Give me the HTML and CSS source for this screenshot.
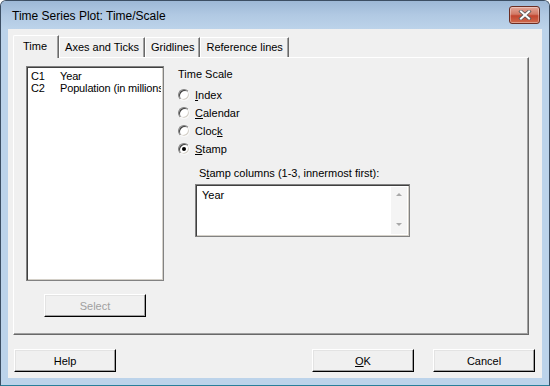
FILE: index.html
```html
<!DOCTYPE html>
<html lang="en">

<head>
    <meta charset="UTF-8">
    <title>Time Series Plot: Time/Scale</title>
    <link rel="stylesheet" href="styles.css">
</head>

<body>
    <div class="window">
        <div class="titlebar">
            <span class="title">Time Series Plot: Time/Scale</span>
            <button class="close" aria-label="Close">
                <svg width="14" height="10" viewBox="0 0 14 10">
                    <path d="M3 1.5 L11 8.5 M11 1.5 L3 8.5" stroke="#5a5a5a" stroke-width="3.6" stroke-linecap="square" />
                    <path d="M3 1.5 L11 8.5 M11 1.5 L3 8.5" stroke="#fff" stroke-width="2" stroke-linecap="square" />
                </svg>
            </button>
        </div>
        <div class="client">
            <div class="tabs">
                <div class="tab active">Time</div>
                <div class="tab">Axes and Ticks</div>
                <div class="tab">Gridlines</div>
                <div class="tab">Reference lines</div>
            </div>
            <div class="panel">
                <div class="left">
                    <div class="listbox">
                        <div class="row"><span class="col">C1</span><span>Year</span></div>
                        <div class="row"><span class="col">C2</span><span>Population (in millions)</span></div>
                    </div>
                    <button class="btn disabled">Select</button>
                </div>
                <div class="right">
                    <div class="group-label">Time Scale</div>
                    <label class="radio"><span class="dot"></span><span><u>I</u>ndex</span></label>
                    <label class="radio"><span class="dot"></span><span><u>C</u>alendar</span></label>
                    <label class="radio"><span class="dot"></span><span>Cloc<u>k</u></span></label>
                    <label class="radio"><span class="dot checked"></span><span><u>S</u>tamp</span></label>
                    <div class="stamp">
                        <div class="stamp-label">S<u>t</u>amp columns (1-3, innermost first):</div>
                        <div class="textbox">
                            <div class="text">Year</div>
                            <div class="scroll">
                                <span class="arrow up"></span>
                                <span class="arrow down"></span>
                            </div>
                        </div>
                    </div>
                </div>
            </div>
            <div class="footer">
                <button class="btn">Help</button>
                <div class="spacer"></div>
                <button class="btn"><u>O</u>K</button>
                <button class="btn">Cancel</button>
            </div>
        </div>
    </div>
</body>

</html>
```

FILE: styles.css
```css
* {
    box-sizing: border-box;
}

html,
body {
    margin: 0;
    padding: 0;
    width: 550px;
    height: 386px;
    overflow: hidden;
    background: #ffffff;
    font-family: 'Liberation Sans', Arial, sans-serif;
    font-size: 11px;
    color: #000;
}

u {
    text-decoration: underline;
    text-underline-offset: 1px;
}

.window {
    width: 550px;
    height: 386px;
    display: flex;
    flex-direction: column;
    background: #bcd3ea;
    border: 1px solid #3c4e63;
    border-bottom-color: #2a7f9a;
    border-radius: 6px 6px 0 0;
    overflow: hidden;
}

.titlebar {
    height: 28px;
    flex: none;
    display: flex;
    align-items: center;
    padding: 0 9px 0 11px;
    background: linear-gradient(to bottom, #9db8d6 0%, #b1c9e3 50%, #bcd3ea 100%);
}

.title {
    flex: 1;
    font-size: 12px;
    color: #000;
    padding-top: 1px;
}

.close {
    width: 31px;
    height: 18px;
    margin-top: -1px;
    padding: 0;
    display: flex;
    align-items: center;
    justify-content: center;
    border: 1px solid #6b2d22;
    border-radius: 3px;
    background: linear-gradient(to bottom, #e3a597 0%, #d27a66 45%, #c2452f 55%, #cf6a4c 100%);
    box-shadow: inset 0 0 0 1px rgba(255, 255, 255, 0.35);
}

.client {
    flex: 1;
    margin: 0 7px 7px 7px;
    background: #f0f0f0;
    display: flex;
    flex-direction: column;
    padding: 6px 13px 0 5px;
}

.tabs {
    display: flex;
    height: 22px;
    align-items: flex-end;
    padding-left: 0;
}

.tab {
    height: 20px;
    padding: 3px 5px 0 5px;
    border-top: 1px solid #fff;
    border-left: 1px solid #fff;
    border-right: 1px solid #696969;
    box-shadow: inset -1px 0 0 #a0a0a0;
    background: #f0f0f0;
    white-space: nowrap;
}

.tab.active {
    height: 23px;
    margin-bottom: -1px;
    padding: 4px 11px 0 9px;
    position: relative;
    z-index: 1;
    border-top-left-radius: 2px;
}

.panel {
    height: 278px;
    display: flex;
    border-top: 1px solid #fff;
    border-left: 1px solid #fff;
    border-right: 1px solid #696969;
    border-bottom: 1px solid #696969;
    box-shadow: inset -1px -1px 0 #a0a0a0;
}

.left {
    width: 163px;
    padding: 8px 0 0 12px;
    display: flex;
    flex-direction: column;
}

.listbox {
    width: 138px;
    height: 215px;
    background: #fff;
    border: 1px solid #828282;
    box-shadow: inset 1px 1px 0 #404040, inset -1px -1px 0 #d4d0c8;
    padding: 3px 2px;
}

.row {
    display: flex;
    height: 12px;
    line-height: 12px;
    white-space: nowrap;
    overflow: hidden;
    letter-spacing: -0.15px;
}

.col {
    width: 31px;
    flex: none;
    padding-left: 2px;
}

.btn {
    width: 102px;
    height: 23px;
    padding: 0;
    font-family: inherit;
    font-size: 11px;
    color: #000;
    background: #f0f0f0;
    border: 1px solid;
    border-color: #fff #000 #000 #fff;
    box-shadow: inset -1px -1px 0 #a0a0a0, inset 1px 1px 0 #e3e3e3;
}

.btn.disabled {
    color: #a0a0a0;
    margin: 13px 0 0 18px;
}

.right {
    flex: 1;
    padding: 10px 0 0 1px;
    display: flex;
    flex-direction: column;
}

.group-label {
    height: 13px;
    line-height: 13px;
    margin-bottom: 5px;
}

.radio {
    display: flex;
    align-items: center;
    height: 18px;
    gap: 5px;
}

.dot {
    width: 12px;
    height: 12px;
    flex: none;
    border-radius: 50%;
    background: #fff;
    border: 1px solid;
    border-color: #808080 #f8f8f8 #f8f8f8 #808080;
    box-shadow: inset 1px 1px 0 #404040, inset -1px -1px 0 #d4d0c8;
    display: flex;
    align-items: center;
    justify-content: center;
}

.dot.checked::after {
    content: "";
    width: 4px;
    height: 4px;
    border-radius: 50%;
    background: #000;
}

.stamp {
    padding: 9px 0 0 17px;
}

.stamp-label {
    height: 13px;
    line-height: 13px;
    padding-left: 4px;
    margin-bottom: 4px;
}

.textbox {
    width: 215px;
    height: 53px;
    display: flex;
    background: #fff;
    border: 1px solid #828282;
    box-shadow: inset 1px 1px 0 #404040, inset -1px -1px 0 #d4d0c8;
    padding: 2px;
}

.text {
    flex: 1;
    padding: 2px 0 0 4px;
}

.scroll {
    width: 16px;
    display: flex;
    flex-direction: column;
    justify-content: space-between;
    align-items: center;
    background: #f4f4f4;
    padding: 6px 0 8px 0;
}

.arrow {
    width: 0;
    height: 0;
    border-left: 3px solid transparent;
    border-right: 3px solid transparent;
}

.arrow.up {
    border-bottom: 3px solid #a8a8a8;
}

.arrow.down {
    border-top: 3px solid #a8a8a8;
}

.footer {
    display: flex;
    padding: 14px 0 0 1px;
    margin-right: -6px;
    gap: 19px;
}

.spacer {
    flex: 1;
}
```
